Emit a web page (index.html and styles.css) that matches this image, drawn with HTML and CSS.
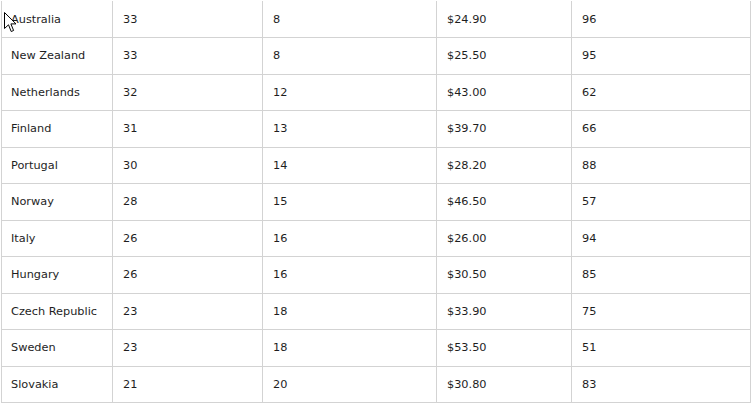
FILE: index.html
```html
<!DOCTYPE html>
<html>
<head>
<meta charset="utf-8">
<link rel="stylesheet" href="styles.css">
</head>
<body>
<div class="wrap">
<table class="grid">
<colgroup><col class="c1"><col class="c2"><col class="c3"><col class="c4"><col class="c5"></colgroup>
<tbody>
<tr><td>Australia</td><td>33</td><td>8</td><td>$24.90</td><td>96</td></tr>
<tr><td>New Zealand</td><td>33</td><td>8</td><td>$25.50</td><td>95</td></tr>
<tr><td>Netherlands</td><td>32</td><td>12</td><td>$43.00</td><td>62</td></tr>
<tr><td>Finland</td><td>31</td><td>13</td><td>$39.70</td><td>66</td></tr>
<tr><td>Portugal</td><td>30</td><td>14</td><td>$28.20</td><td>88</td></tr>
<tr><td>Norway</td><td>28</td><td>15</td><td>$46.50</td><td>57</td></tr>
<tr><td>Italy</td><td>26</td><td>16</td><td>$26.00</td><td>94</td></tr>
<tr><td>Hungary</td><td>26</td><td>16</td><td>$30.50</td><td>85</td></tr>
<tr><td>Czech Republic</td><td>23</td><td>18</td><td>$33.90</td><td>75</td></tr>
<tr><td>Sweden</td><td>23</td><td>18</td><td>$53.50</td><td>51</td></tr>
<tr><td>Slovakia</td><td>21</td><td>20</td><td>$30.80</td><td>83</td></tr>
</tbody>
</table>
<svg class="cursor" width="13" height="21" viewBox="0 0 13 21"><path d="M0.5 0.5 L0.5 16.5 L4.5 12.8 L7.2 19.5 L9.6 18.5 L6.9 11.9 L12 11.9 Z" fill="#fff" stroke="#000" stroke-width="1" stroke-linejoin="miter"/></svg>
</div>
</body>
</html>
```
FILE: styles.css
```css
html, body {
  margin: 0;
  padding: 0;
  background: #fff;
}
.wrap {
  position: relative;
  padding: 1px 0 0 1px;
}
.grid {
  border-collapse: collapse;
  table-layout: fixed;
  width: 749px;
  font-family: "DejaVu Sans", Verdana, sans-serif;
  font-size: 11.3px;
  color: #1e1e1e;
}
.c1 { width: 111px; }
.c2 { width: 150px; }
.c3 { width: 174px; }
.c4 { width: 135px; }
.c5 { width: 179px; }
.grid td {
  height: 36.5px;
  box-sizing: border-box;
  padding: 0 0 0 10px;
  border: 1px solid #d3d3d3;
  border-top: none;
  vertical-align: middle;
  white-space: nowrap;
}
.grid td:first-child {
  padding-left: 9px;
}
.cursor {
  position: absolute;
  left: 4px;
  top: 12px;
}
```
